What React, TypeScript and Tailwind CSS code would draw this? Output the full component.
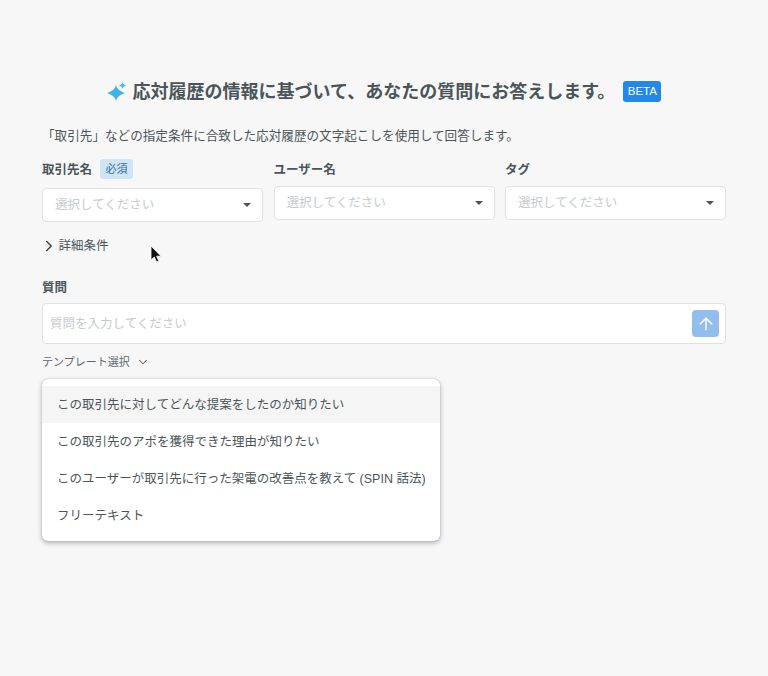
import { ArrowUp, ChevronDown, ChevronRight } from "lucide-react";

const font = { fontFamily: '"Liberation Sans", "Noto Sans CJK JP", sans-serif' };

const templates = [
  "この取引先に対してどんな提案をしたのか知りたい",
  "この取引先のアポを獲得できた理由が知りたい",
  "このユーザーが取引先に行った架電の改善点を教えて (SPIN 話法)",
  "フリーテキスト",
];

function SelectBox() {
  return (
    <div className="flex h-[34px] items-center justify-between rounded-[4px] border border-[#dfe2e3] bg-white pl-3 pr-[11px]">
      <span className="text-[12.500px] text-[#c6cbcd]">選択してください</span>
      <span className="h-0 w-0 border-x-[4px] border-t-[4px] border-x-transparent border-t-[#4b5559]" />
    </div>
  );
}

function Sparkle() {
  return (
    <svg width="20" height="20" viewBox="0 0 20 20" className="mr-[6px]">
      <path d="M9 4c.9 3.700 3 5.800 9 8-6 2.200-8.100 4.300-9 8-.9-3.700-3-5.800-9-8 6-2.200 8.100-4.300 9-8z" fill="#3db4e8" />
      <path d="M15.500 1c.4 1.800 1.100 2.600 3.500 3.500-2.400.9-3.100 1.700-3.500 3.500-.4-1.800-1.100-2.600-3.500-3.500 2.400-.9 3.100-1.700 3.500-3.500z" fill="#45c3e0" />
    </svg>
  );
}

export default function App() {
  return (
    <div className="h-[676px] w-[768px] overflow-hidden bg-[#f7f7f8] px-[42px] pt-[79px] text-[#4b5559]" style={font}>
      <div className="flex h-[24px] items-center justify-center">
        <Sparkle />
        <h1 className="pt-[2px] text-[18px] font-bold text-[#4b5559]">応対履歴の情報に基づいて、あなたの質問にお答えします。</h1>
        <span className="ml-[8px] flex h-[21px] w-[38px] items-center justify-center rounded-[3px] bg-[#2388e6] pt-[2px] text-[11.500px] text-white">BETA</span>
      </div>

      <p className="mt-[23px] h-[20px] text-[12.600px] leading-[20px]">「取引先」などの指定条件に合致した応対履歴の文字起こしを使用して回答します。</p>

      <div className="mt-[12px] grid grid-cols-[221px_221px_221px] gap-x-[10.500px]">
        <div>
          <div className="flex h-[22px] items-center gap-2">
            <span className="pt-[2px] text-[12.500px] font-bold">取引先名</span>
            <span className="flex h-[20px] w-[33px] items-center justify-center rounded-[3px] bg-[#cfe5f6] text-[11px] text-[#2c6ea3]">必須</span>
          </div>
          <div className="mt-[8px]"><SelectBox /></div>
        </div>
        <div>
          <div className="flex h-[22px] items-center pt-[2px] text-[12.500px] font-bold">ユーザー名</div>
          <div className="mt-[6px]"><SelectBox /></div>
        </div>
        <div>
          <div className="flex h-[22px] items-center pt-[2px] text-[12.500px] font-bold">タグ</div>
          <div className="mt-[6px]"><SelectBox /></div>
        </div>
      </div>

      <div className="mt-[14px] flex h-[20px] items-center text-[12.500px]">
        <ChevronRight size={18} strokeWidth={2} className="-ml-[2.500px] mr-[1px] text-[#3c4548]" />
        <span>詳細条件</span>
      </div>

      <div className="mt-[21px] flex h-[20px] items-center pt-[2px] text-[12.500px] font-bold">質問</div>

      <div className="mt-[6px] flex h-[41px] items-center justify-between rounded-[4px] border border-[#dfe2e3] bg-white pl-[7px] pr-[6px]">
        <span className="pt-[2px] text-[12.500px] text-[#c6cbcd]">質問を入力してください</span>
        <span className="flex h-[27px] w-[27px] items-center justify-center rounded-[4px] bg-[#93bdec]">
          <ArrowUp size={20} strokeWidth={1.800} className="text-white" />
        </span>
      </div>

      <div className="relative mt-[9px]">
        <div className="flex h-[18px] items-center gap-[6px] text-[11px] text-[#5f696d]">
          <span>テンプレート選択</span>
          <ChevronDown size={14} strokeWidth={1.800} className="text-[#5f696d]" />
        </div>

        <ul className="absolute left-0 top-[26px] w-[398px] rounded-[6px] bg-white py-[7px] text-[12.500px] shadow-[0_0_1px_rgba(60,70,75,0.5),0_2px_5px_rgba(60,70,75,0.4)]">
          {templates.map((t, i) => (
            <li key={t} className={`flex h-[37px] items-center whitespace-nowrap px-[15px] pt-[2px] ${i === 0 ? "bg-[#f5f5f5]" : ""}`}>
              {t}
            </li>
          ))}
        </ul>
      </div>

      <svg width="13" height="19" viewBox="0 0 13 19" className="absolute left-[150px] top-[245px]">
        <path d="M1 1v14l3.300-3 2.300 5 2.200-1-2.200-4.800H11z" fill="#111" stroke="#fff" strokeWidth="0.800" />
      </svg>
    </div>
  );
}
